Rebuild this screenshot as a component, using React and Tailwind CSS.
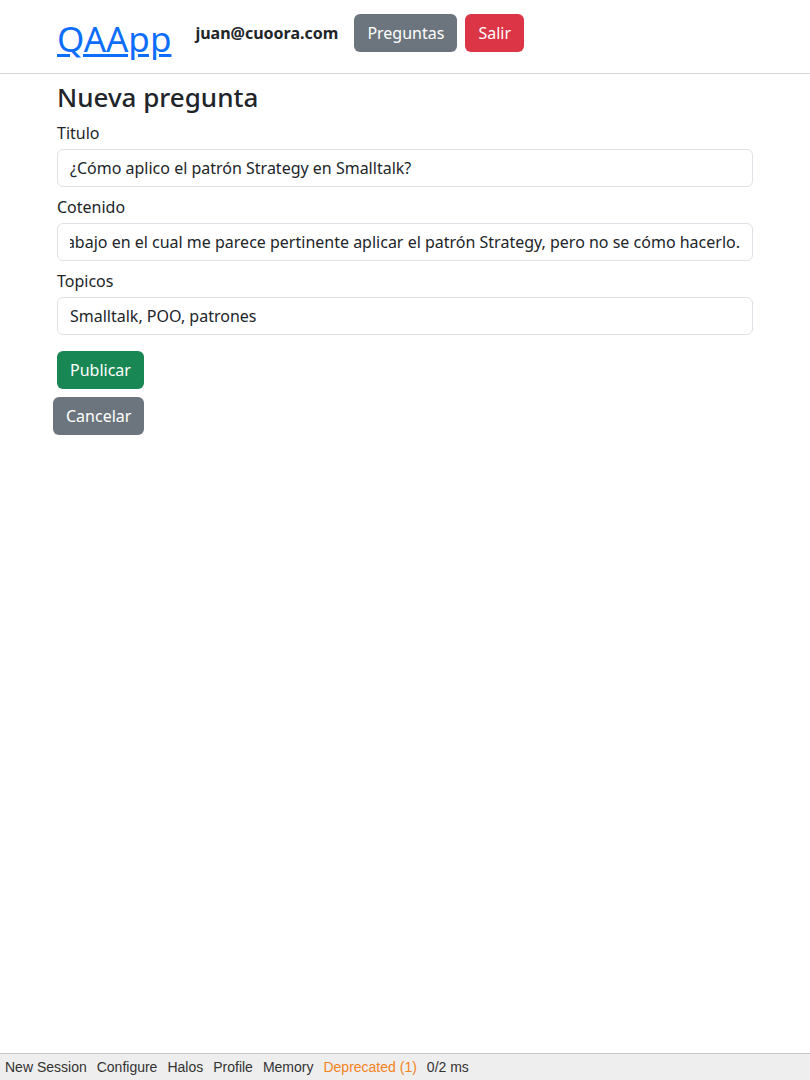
export default function App() {
  const font = { fontFamily: '"Noto Sans", "Liberation Sans", sans-serif' };
  return (
    <div className="min-h-[1080px] flex flex-col bg-white text-[#212529]" style={font}>
      <header className="border-b border-[#d4d4d4] h-[74px] pt-[14px]">
        <div className="w-[720px] mx-auto px-3 flex items-center h-[38px]">
          <a href="#" className="text-[#0d6efd] underline text-[35px] leading-none mr-6 mt-[10px]">QAApp</a>
          <span className="font-bold text-base mr-4">juan@cuoora.com</span>
          <button className="bg-[#6c757d] text-white rounded-[6px] h-[38px] px-[13px] text-base mr-2">Preguntas</button>
          <button className="bg-[#dc3545] text-white rounded-[6px] h-[38px] px-[13px] text-base">Salir</button>
        </div>
      </header>
      <main className="w-[720px] mx-auto px-3 flex-1">
        <h3 className="text-[26px] leading-[1.2] mt-[8px] mb-2 font-medium">Nueva pregunta</h3>
        <form className="flex flex-col">
          <label className="text-base leading-6 mb-1">Titulo</label>
          <div className="h-[38px] border border-[#dee2e6] rounded-[6px] px-3 flex items-center text-base mb-2 whitespace-nowrap overflow-hidden">
            ¿Cómo aplico el patrón Strategy en Smalltalk?
          </div>
          <label className="text-base leading-6 mb-1">Cotenido</label>
          <div className="h-[38px] border border-[#dee2e6] rounded-[6px] px-3 flex items-center text-base mb-2">
            <div className="flex-1 flex justify-end overflow-hidden whitespace-nowrap">
              <span>Estoy realizando un trabajo en el cual me parece pertinente aplicar el patrón Strategy, pero no se cómo hacerlo.</span>
            </div>
          </div>
          <label className="text-base leading-6 mb-1">Topicos</label>
          <div className="h-[38px] border border-[#dee2e6] rounded-[6px] px-3 flex items-center text-base mb-4 whitespace-nowrap overflow-hidden">
            Smalltalk, POO, patrones
          </div>
          <div>
            <button type="button" className="bg-[#198754] text-white rounded-[6px] h-[38px] px-[13px] text-base">Publicar</button>
          </div>
          <div className="mt-2 -ml-1">
            <button type="button" className="bg-[#6c757d] text-white rounded-[6px] h-[38px] px-[13px] text-base">Cancelar</button>
          </div>
        </form>
      </main>
      <footer className="h-[27px] bg-[#eeeeee] border-t border-[#c8c8c8] flex items-center px-[5px] gap-[10px] text-[14px] text-[#333]" style={{ fontFamily: '"Liberation Sans", Arial, sans-serif' }}>
        <span>New Session</span>
        <span>Configure</span>
        <span>Halos</span>
        <span>Profile</span>
        <span>Memory</span>
        <span className="text-[#f58220]">Deprecated (1)</span>
        <span>0/2 ms</span>
      </footer>
    </div>
  );
}
